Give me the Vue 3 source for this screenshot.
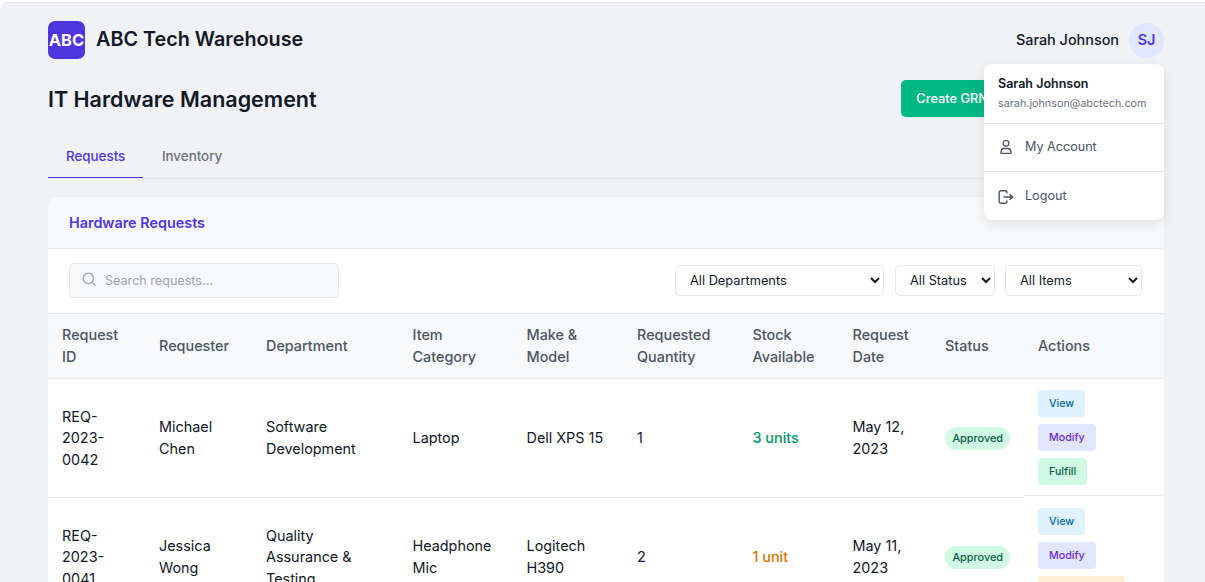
<script setup>
import { ref } from 'vue'

const activeTab = ref('Requests')
const tabs = ['Requests', 'Inventory']

const columns = [
  { label: 'Request ID', width: 97 },
  { label: 'Requester', width: 107 },
  { label: 'Department', width: 146.5 },
  { label: 'Item Category', width: 114 },
  { label: 'Make & Model', width: 110.5 },
  { label: 'Requested Quantity', width: 115.5 },
  { label: 'Stock Available', width: 100 },
  { label: 'Request Date', width: 92.5 },
  { label: 'Status', width: 93 },
  { label: 'Actions', width: 140.5 }
]

const requests = [
  {
    id: 'REQ-2023-0042',
    requester: 'Michael Chen',
    department: 'Software Development',
    category: 'Laptop',
    model: 'Dell XPS 15',
    quantity: 1,
    stock: '3 units',
    stockLevel: 'good',
    date: 'May 12, 2023',
    status: 'Approved',
    actions: [
      { label: 'View', kind: 'view' },
      { label: 'Modify', kind: 'modify' },
      { label: 'Fulfill', kind: 'fulfill' }
    ]
  },
  {
    id: 'REQ-2023-0041',
    requester: 'Jessica Wong',
    department: 'Quality Assurance & Testing',
    category: 'Headphone Mic',
    model: 'Logitech H390',
    quantity: 2,
    stock: '1 unit',
    stockLevel: 'low',
    date: 'May 11, 2023',
    status: 'Approved',
    actions: [
      { label: 'View', kind: 'view' },
      { label: 'Modify', kind: 'modify' },
      { label: 'Procure Item', kind: 'order' }
    ]
  }
]
</script>

<template>
  <div class="page">
    <header class="topbar">
      <div class="brand">
        <div class="logo">ABC</div>
        <span class="brand-name">ABC Tech Warehouse</span>
      </div>
      <div class="user">
        <span class="user-name">Sarah Johnson</span>
        <div class="avatar">SJ</div>
        <div class="user-menu">
          <div class="menu-head">
            <div class="menu-name">Sarah Johnson</div>
            <div class="menu-mail">sarah.johnson@abctech.com</div>
          </div>
          <a class="menu-item">
            <svg width="16" height="16" viewBox="0 0 16 16" fill="none" stroke="currentColor" stroke-width="1.3">
              <circle cx="8" cy="4.2" r="2.9" />
              <path d="M3 14.4v-1.7c0-1.9 1.3-3.2 3-3.2h4c1.7 0 3 1.3 3 3.2v1.7z" stroke-linejoin="round" />
            </svg>
            My Account
          </a>
          <a class="menu-item">
            <svg width="16" height="16" viewBox="0 0 16 16" fill="none" stroke="currentColor" stroke-width="1.4" stroke-linecap="round" stroke-linejoin="round">
              <path d="M9 4V3.2C9 2.3 8.4 1.8 7.5 1.8H2.8C1.9 1.8 1.2 2.4 1.2 3.2v9.6c0 .8.7 1.4 1.6 1.4h4.7c.9 0 1.5-.6 1.5-1.4V12" />
              <path d="M6 8h8.6M12 5.6 14.8 8 12 10.4" />
            </svg>
            Logout
          </a>
        </div>
      </div>
    </header>

    <div class="title-row">
      <h1>IT Hardware Management</h1>
      <div class="title-actions">
        <button class="btn-green">Create GRN</button>
        <button class="btn-primary">New Request</button>
      </div>
    </div>

    <nav class="tabs">
      <a
        v-for="tab in tabs"
        :key="tab"
        class="tab"
        :class="{ active: tab === activeTab }"
        @click="activeTab = tab"
      >{{ tab }}</a>
    </nav>

    <section class="card">
      <div class="card-head">Hardware Requests</div>
      <div class="toolbar">
        <label class="search">
          <svg width="16" height="16" viewBox="0 0 16 16" fill="none" stroke="#9ca3af" stroke-width="1.3" stroke-linecap="round">
            <circle cx="6.3" cy="6.4" r="5.2" />
            <path d="m10 10.1 3.3 3.3" />
          </svg>
          <input type="text" placeholder="Search requests..." />
        </label>
        <div class="filters">
          <select class="f-dept"><option>All Departments</option></select>
          <select class="f-status"><option>All Status</option></select>
          <select class="f-items"><option>All Items</option></select>
        </div>
      </div>

      <table>
        <colgroup>
          <col v-for="c in columns" :key="c.label" :style="{ width: c.width + 'px' }" />
        </colgroup>
        <thead>
          <tr>
            <th v-for="c in columns" :key="c.label">{{ c.label }}</th>
          </tr>
        </thead>
        <tbody>
          <tr v-for="r in requests" :key="r.id">
            <td>{{ r.id }}</td>
            <td>{{ r.requester }}</td>
            <td>{{ r.department }}</td>
            <td>{{ r.category }}</td>
            <td>{{ r.model }}</td>
            <td>{{ r.quantity }}</td>
            <td><span class="stock" :class="r.stockLevel">{{ r.stock }}</span></td>
            <td>{{ r.date }}</td>
            <td><span class="badge">{{ r.status }}</span></td>
            <td class="actions">
              <button v-for="a in r.actions" :key="a.label" class="act" :class="a.kind">{{ a.label }}</button>
            </td>
          </tr>
        </tbody>
      </table>
    </section>
  </div>
</template>

<style>
html, body {
  margin: 0;
  height: 100%;
  overflow: hidden;
  background: #fff;
}
</style>

<style scoped>
.page {
  box-sizing: border-box;
  height: 580px;
  margin-top: 2px;
  padding: 18px 41px 0 48px;
  background: #f0f2f6;
  border-top: 1px solid #e5e7eb;
  border-top-left-radius: 8px;
  overflow: hidden;
  font-family: Inter, "Liberation Sans", sans-serif;
  font-size: 14.4px;
  line-height: 1.5;
  color: #111827;
}

.topbar {
  display: flex;
  align-items: center;
  justify-content: space-between;
  height: 38px;
}

.brand {
  display: flex;
  align-items: center;
  gap: 11px;
}

.logo {
  width: 37px;
  height: 38px;
  border-radius: 7px;
  background: #4f35e0;
  color: #fff;
  font-size: 16.5px;
  font-weight: 700;
  display: flex;
  align-items: center;
  justify-content: center;
}

.brand-name {
  font-size: 19.8px;
  font-weight: 600;
}

.user {
  position: relative;
  display: flex;
  align-items: center;
  gap: 10px;
}

.user-name {
  font-weight: 500;
}

.avatar {
  width: 35px;
  height: 35px;
  border-radius: 50%;
  background: #e0e7ff;
  color: #4f35e0;
  font-weight: 600;
  display: flex;
  align-items: center;
  justify-content: center;
}

.user-menu {
  position: absolute;
  top: 41px;
  right: 0;
  z-index: 5;
  width: 180px;
  background: #fff;
  border-radius: 8px;
  box-shadow: 0 4px 12px rgba(0, 0, 0, 0.1);
}

.menu-head {
  height: 60px;
  padding: 10px 14px 0;
  box-sizing: border-box;
  border-bottom: 1px solid #e5e7eb;
}

.menu-name {
  font-size: 12.5px;
  font-weight: 600;
  line-height: 19px;
}

.menu-mail {
  font-size: 10.8px;
  color: #6b7280;
  line-height: 17px;
  margin-top: 2px;
}

.menu-item {
  box-sizing: border-box;
  display: flex;
  align-items: center;
  gap: 11px;
  height: 47px;
  padding: 0 14px;
  font-size: 12.6px;
  color: #4b5563;
}

.menu-item + .menu-item {
  height: 49px;
  padding-top: 2px;
  border-top: 1px solid #e5e7eb;
}

.menu-item svg {
  flex: none;
}

.title-row {
  display: flex;
  align-items: center;
  justify-content: space-between;
  margin-top: 21px;
  height: 37px;
}

h1 {
  margin: 0;
  padding-top: 2px;
  font-size: 21.5px;
  font-weight: 600;
  line-height: 37px;
}

.title-actions {
  display: flex;
  gap: 10px;
}

.title-actions button {
  height: 37px;
  padding: 0 15px 1px;
  border: none;
  border-radius: 5px;
  font-family: inherit;
  font-size: 12.8px;
  font-weight: 500;
  color: #fff;
}

.btn-green {
  background: #00b884;
}

.title-actions .btn-primary {
  width: 151px;
  background: #4f35e0;
}

.tabs {
  display: flex;
  margin-top: 21px;
  border-bottom: 1px solid #e5e7eb;
}

.tab {
  padding: 7px 18px 10px;
  height: 40px;
  box-sizing: border-box;
  font-size: 13.36px;
  font-weight: 500;
  line-height: 22px;
  color: #6b7280;
  border-bottom: 1px solid transparent;
}

.tab + .tab {
  margin-left: 0.6px;
}

.tab.active {
  color: #4f35e0;
  border-bottom-color: #4f35e0;
}

.card {
  margin-top: 18px;
  background: #fff;
  border-radius: 10px 10px 0 0;
  overflow: hidden;
}

.card-head {
  height: 52px;
  box-sizing: border-box;
  padding: 0 21px;
  display: flex;
  align-items: center;
  background: #f8f9fb;
  border-bottom: 1px solid #e5e7eb;
  font-weight: 600;
  color: #4f35e0;
}

.toolbar {
  height: 64px;
  box-sizing: border-box;
  padding: 0 22px 2px 21px;
  display: flex;
  align-items: center;
  justify-content: space-between;
}

.search {
  box-sizing: border-box;
  width: 270px;
  height: 35px;
  padding: 0 12px;
  display: flex;
  align-items: center;
  gap: 7px;
  background: #f8f9fb;
  border: 1px solid #e5e7eb;
  border-radius: 5px;
}

.search input {
  flex: 1;
  min-width: 0;
  border: none;
  outline: none;
  background: none;
  padding: 0;
  font-family: inherit;
  font-size: 12.6px;
}

.search input::placeholder {
  color: #9ca3af;
}

.filters {
  display: flex;
  gap: 10px;
}

select {
  box-sizing: border-box;
  height: 31px;
  padding: 0 4px 0 10px;
  background: #fff;
  border: 1px solid #e5e7eb;
  border-radius: 5px;
  font-family: inherit;
  font-size: 12.8px;
  color: #111827;
}

.f-dept { width: 209px; }
.f-status { width: 100px; margin-left: 1px; }
.f-items { width: 137px; }

table {
  width: 100%;
  table-layout: fixed;
  border-collapse: collapse;
}

th {
  padding: 10px 14px;
  height: 65px;
  box-sizing: border-box;
  text-align: left;
  font-weight: 500;
  color: #4b5563;
  background: #f8f9fb;
  border-top: 1px solid #e5e7eb;
  border-bottom: 1px solid #e5e7eb;
}

td {
  padding: 15px 14px 14px;
  vertical-align: middle;
  border-bottom: 1px solid transparent;
  box-shadow: 0 1px 0 #e5e7eb;
}

tr + tr td {
  padding-top: 17px;
}

.stock {
  font-weight: 500;
}

.stock.good { color: #059669; }
.stock.low { color: #d97706; }

.badge {
  display: inline-block;
  padding: 3px 7.4px;
  border-radius: 12px;
  background: #d1fae5;
  color: #065f46;
  font-size: 10.88px;
  font-weight: 500;
  line-height: 17px;
}

td.actions {
  padding: 11px 14px;
  box-shadow: inset 0 -1px 0 #e5e7eb;
}

.act {
  display: block;
  height: 27px;
  padding: 0 11px;
  margin-bottom: 7px;
  border: none;
  border-radius: 4px;
  font-family: inherit;
  font-size: 10.7px;
  font-weight: 500;
  white-space: nowrap;
}

.act:last-child {
  margin-bottom: 0;
}

.act.view { background: #e0f2fe; color: #0369a1; }
.act.modify { background: #e0e7ff; color: #6d28d9; }
.act.fulfill { background: #d1fae5; color: #065f46; }
.act.order { background: #ffedd5; color: #c2410c; }
</style>
